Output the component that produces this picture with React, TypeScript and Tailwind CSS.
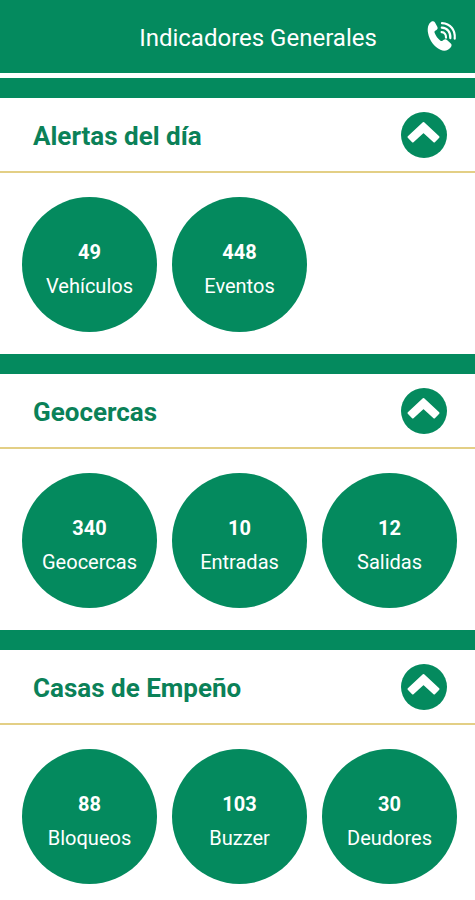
import { useState } from 'react';

interface Indicator {
  label: string;
  value: number;
}

interface Group {
  title: string;
  items: Indicator[];
}

const groups: Group[] = [
  {
    title: 'Alertas del día',
    items: [
      { label: 'Vehículos', value: 49 },
      { label: 'Eventos', value: 448 },
    ],
  },
  {
    title: 'Geocercas',
    items: [
      { label: 'Geocercas', value: 340 },
      { label: 'Entradas', value: 10 },
      { label: 'Salidas', value: 12 },
    ],
  },
  {
    title: 'Casas de Empeño',
    items: [
      { label: 'Bloqueos', value: 88 },
      { label: 'Buzzer', value: 103 },
      { label: 'Deudores', value: 30 },
    ],
  },
];

function PhoneIcon() {
  return (
    <svg viewBox="0 0 30 32" className="h-8 w-[30px]" fill="none" aria-hidden="true">
      <path
        fill="currentColor"
        d="M4.600.6C6 0 7.200.3 8 1.500l2.300 4.200c.7 1.300.4 2.400-.8 3.200L8.200 9.800c-.7.5-.9 1.100-.6 1.900 1.200 3.200 3.200 5.900 5.900 8 .7.5 1.300.5 2 0l1.300-1c1.100-.8 2.200-.7 3.200.2l3.800 3.700c1 1 1 2.200.2 3.300-2.500 3.500-6.400 4.700-10.600 2.900C7.300 26 2.500 19.800 1.100 12.300.2 7.400 1 2.800 4.600.6Z"
      />
      <g stroke="currentColor" strokeWidth="2.200" strokeLinecap="round">
        <path d="M14.600 11.200c2.900.2 4.700 2.300 4.400 5.500" />
        <path d="M14.800 6.700c5.500.3 9 4.400 8.500 10.400" />
        <path d="M15 2.200c8.300.4 13.500 6.700 12.700 15.400" />
      </g>
    </svg>
  );
}

function ChevronIcon({ open }: { open: boolean }) {
  return (
    <svg viewBox="0 0 46 46" className={open ? 'w-full h-full' : 'w-full h-full rotate-180'} aria-hidden="true">
      <path
        d="M22.500 11 37.500 25 33.200 29.500 22.500 19.800 11.800 29.500 7.500 25Z"
        fill="currentColor"
        stroke="currentColor"
        strokeWidth="2"
        strokeLinejoin="round"
      />
    </svg>
  );
}

function IndicatorGroup({ title, items }: Group) {
  const [open, setOpen] = useState(true);

  return (
    <section className="border-t-20 border-[#048a5e]">
      <div className="flex h-[75px] items-center justify-between border-b-2 border-[#e3cf85] pl-[33px] pr-7">
        <h2 className="pt-[2px] text-[26px] leading-8 font-bold text-[#0b8158]">{title}</h2>
        <button
          type="button"
          aria-label={title}
          aria-expanded={open}
          onClick={() => setOpen(!open)}
          className="size-[46px] rounded-full bg-[#048a5e] text-white"
        >
          <ChevronIcon open={open} />
        </button>
      </div>

      {open && (
        <div className="grid grid-cols-3 gap-[15px] pt-6 pb-[22px] pl-[22px] pr-[18px]">
          {items.map(item => (
            <div
              key={item.label}
              className="flex aspect-square flex-col items-center justify-center rounded-full bg-[#048a5e] pt-2 text-xl text-white"
            >
              <span className="leading-[34px] font-bold">{item.value}</span>
              <span className="leading-[34px]">{item.label}</span>
            </div>
          ))}
        </div>
      )}
    </section>
  );
}

export default function App() {
  return (
    <div className="min-h-screen bg-white font-['Roboto',sans-serif]">
      <header className="mb-[5px] flex h-[73px] items-center bg-[#048a5e] pl-[98px] pr-[18px] text-white">
        <h1 className="flex-1 pt-[2px] text-center text-2xl">Indicadores Generales</h1>
        <button type="button" aria-label="Llamar" className="ml-[9px]">
          <PhoneIcon />
        </button>
      </header>

      <main>
        {groups.map(group => (
          <IndicatorGroup key={group.title} {...group} />
        ))}
      </main>
    </div>
  );
}
